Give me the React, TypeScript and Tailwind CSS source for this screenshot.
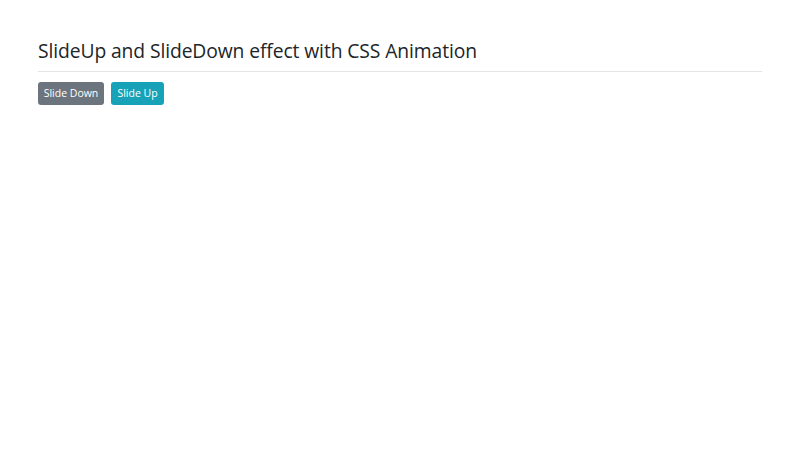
export default function App() {
  return (
    <div className="min-h-[450px] w-full bg-white px-[38px] pt-[36px] font-['Open_Sans',sans-serif] text-[#212529]">
      <h3 className="text-[19.3px] leading-[30px] font-normal tracking-[-0.1px]">
        SlideUp and SlideDown effect with CSS Animation
      </h3>
      <hr className="mt-[5px] border-0 border-t border-[#e5e5e5]" />
      <div className="mt-[10px] flex gap-[7px]">
        <button className="h-[23px] w-[66px] rounded-[3px] bg-[#6c757d] text-[10.5px] text-white">
          Slide Down
        </button>
        <button className="h-[23px] w-[53px] rounded-[3px] bg-[#17a2b8] text-[10.5px] text-white">
          Slide Up
        </button>
      </div>
    </div>
  )
}
